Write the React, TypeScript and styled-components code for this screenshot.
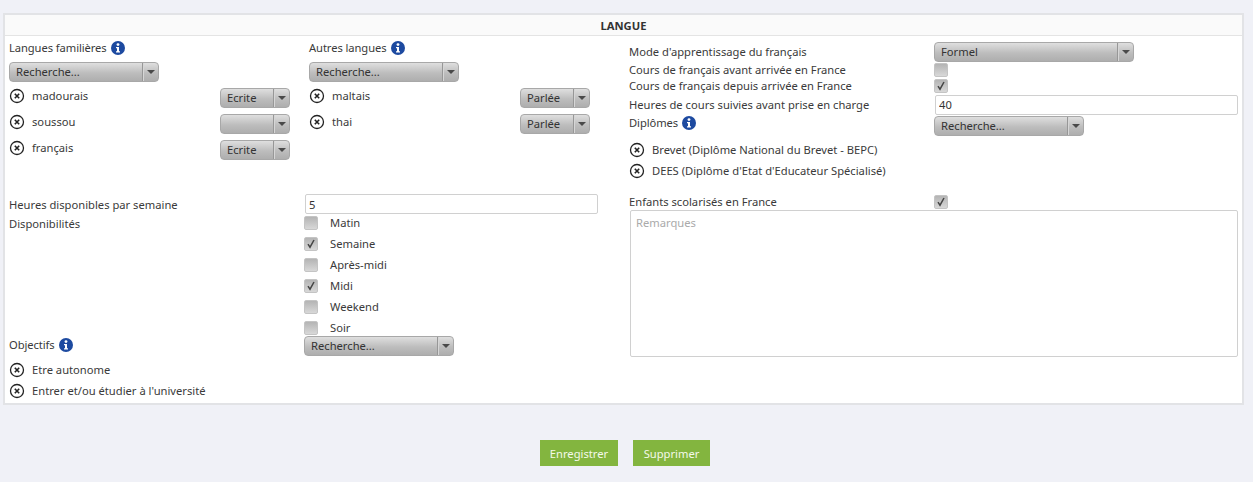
import React from 'react';
import styled, { createGlobalStyle } from 'styled-components';

const GlobalStyle = createGlobalStyle`
	html, body {
		margin: 0;
		padding: 0;
		background: #f0f1f7;
	}
	body {
		font-family: "Noto Sans", "Open Sans", sans-serif;
		font-size: 11.2px;
		color: #3a3a3a;
	}
	* {
		box-sizing: border-box;
	}
`;

const Page = styled.div`
	padding: 13px 9px 0 3px;
`;

const Panel = styled.section`
	border: 2px solid #e2e3e6;
	background: #fff;
	height: 392px;
`;

const PanelTitle = styled.h2`
	margin: 0;
	height: 21px;
	line-height: 21px;
	background: #fafafa;
	border-bottom: 1px solid #e4e4e4;
	font-size: 11.2px;
	font-weight: 700;
	text-align: center;
	color: #333;
`;

const PanelBody = styled.div`
	padding: 0 4px;
`;

const TopRow = styled.div`
	display: flex;
	height: 158px;
`;

const BottomRow = styled.div`
	display: flex;
`;

const LanguageColumn = styled.div`
	width: 300px;
	padding-top: 4px;
`;

const SideColumn = styled.div`
	flex: 1;
	padding-top: 5px;
	margin-left: 20px;
`;

const Heading = styled.div`
	display: flex;
	align-items: center;
	gap: 4px;
	height: 16px;
	line-height: 16px;
	margin-bottom: 6px;
	letter-spacing: -0.08px;
`;

const LanguageList = styled.div`
	display: flex;
	flex-direction: column;
	gap: 6px;
	width: 281px;
	margin-top: 6px;
`;

const LanguageRow = styled.div`
	display: flex;
	justify-content: space-between;
	height: 20px;
`;

const TagRow = styled.div<{ $top?: boolean }>`
	display: flex;
	align-items: ${(props) => (props.$top ? 'flex-start' : 'center')};
	gap: 7px;
	height: ${(props) => (props.$top ? '14px' : '21px')};
	line-height: 15px;
`;

const TagIcon = styled.svg`
	width: 16px;
	height: 16px;
	flex: none;
`;

const SelectBox = styled.div<{ $width: number }>`
	display: flex;
	width: ${(props) => props.$width}px;
	height: 20px;
	flex: none;
	border: 1px solid #a8a8a8;
	border-radius: 4px;
	background: linear-gradient(#dfdfdf, #bdbdbd 55%, #aeaeae);
	line-height: 18px;
	color: #333;
`;

const SelectValue = styled.span`
	flex: 1;
	padding-left: 6px;
`;

const SelectArrow = styled.span`
	position: relative;
	width: 16px;
	border-left: 1px solid #979797;
	box-shadow: inset 1px 0 0 #d6d6d6;

	&::after {
		content: "";
		position: absolute;
		top: 7px;
		left: 4px;
		border: 4px solid transparent;
		border-top: 4px solid #4a4a4a;
		border-bottom: 0;
	}
`;

const FormRow = styled.div<{ $height: number; $columns?: number }>`
	display: grid;
	grid-template-columns: ${(props) => props.$columns ?? 305}px 1fr;
	align-items: center;
	height: ${(props) => props.$height}px;
	line-height: 16px;
`;

const TagGroup = styled.div`
	margin: 3px 0 0 0;
`;

const TextField = styled.input`
	display: block;
	width: calc(100% - 1px);
	height: 20px;
	margin-left: 1px;
	padding: 0 3px;
	border: 1px solid #d0d0d0;
	border-radius: 2px;
	background: #fff;
	font: inherit;
	color: #333;
	outline: none;
`;

const CheckBox = styled.span`
	display: flex;
	align-items: center;
	justify-content: center;
	width: 14px;
	height: 14px;
	border: 1px solid #c4c4c4;
	border-radius: 2px;
	background: linear-gradient(#b4b4b4, #d8d8d8);
`;

const LeftBlock = styled.div`
	width: 600px;
`;

const HoursRow = styled.div`
	width: 589px;
`;

const HoursLabel = styled.span`
	padding-top: 1px;
`;

const RightBlock = styled.div`
	flex: 1;
	margin-left: 20px;
`;

const DispoGrid = styled.div`
	display: grid;
	grid-template-columns: 295px 1fr;
	height: 123px;
`;

const DispoLabel = styled.div`
	line-height: 21px;
`;

const CheckList = styled.div`
	display: flex;
	flex-direction: column;
	margin-top: -1px;
`;

const CheckRow = styled.div`
	display: flex;
	flex: none;
	align-items: center;
	gap: 12px;
	height: 21px;
	line-height: 16px;
`;

const ObjectifsGrid = styled.div`
	display: grid;
	grid-template-columns: 295px 1fr;
	height: 20px;
`;

const ObjectifsHeading = styled(Heading)`
	margin-top: 1px;
`;

const ObjectifsTags = styled.div`
	margin-top: 3px;
`;

const Remarks = styled.textarea`
	display: block;
	width: 608px;
	height: 147px;
	margin-left: 1px;
	padding: 4px 5px;
	border: 1px solid #d0d0d0;
	border-radius: 2px;
	font: inherit;
	resize: none;
	outline: none;

	&::placeholder {
		color: #aaa;
		opacity: 1;
	}
`;

const Footer = styled.div`
	display: flex;
	justify-content: center;
	gap: 15px;
	margin: 35px 0 0 3px;
`;

const ActionButton = styled.button<{ $width: number }>`
	width: ${(props) => props.$width}px;
	height: 26px;
	padding: 0;
	border: 0;
	background: #83b53f;
	color: #f4f9ea;
	font: inherit;
`;

const InfoIcon = () => (
	<svg width="14" height="14" viewBox="0 0 14 14">
		<circle cx="7" cy="7" r="7" fill="#1d4aa0" />
		<circle cx="7" cy="3.6" r="1.4" fill="#fff" />
		<path d="M5 6h3v4.2h1v1.3H5v-1.3h1V7.3H5z" fill="#fff" />
	</svg>
);

const RemoveIcon = () => (
	<TagIcon viewBox="0 0 16 16">
		<circle cx="8" cy="8" r="6.5" fill="none" stroke="#222" strokeWidth="1.3" />
		<path d="M5.8 5.8l4.4 4.4M10.2 5.8l-4.4 4.4" stroke="#222" strokeWidth="1.6" />
	</TagIcon>
);

const CheckMark = () => (
	<svg width="10" height="10" viewBox="0 0 10 10">
		<path d="M2 5.2l2 3L8 1" fill="none" stroke="#444" strokeWidth="1.5" />
	</svg>
);

const Select = ({ value, width }: { value?: string; width: number }) => (
	<SelectBox $width={width}>
		<SelectValue>{value}</SelectValue>
		<SelectArrow />
	</SelectBox>
);

const Tag = ({ label, top }: { label: string; top?: boolean }) => (
	<TagRow $top={top}>
		<RemoveIcon />
		<span>{label}</span>
	</TagRow>
);

const LanguageColumnBlock = ({ title, items }: { title: string; items: [string, string][] }) => (
	<LanguageColumn>
		<Heading>
			{title} <InfoIcon />
		</Heading>
		<Select value="Recherche..." width={150} />
		<LanguageList>
			{items.map(([name, level]) => (
				<LanguageRow key={name}>
					<Tag label={name} top />
					<Select value={level} width={70} />
				</LanguageRow>
			))}
		</LanguageList>
	</LanguageColumn>
);

const slots: [string, boolean][] = [
	['Matin', false],
	['Semaine', true],
	['Après-midi', false],
	['Midi', true],
	['Weekend', false],
	['Soir', false],
];

export default function App() {
	return (
		<Page>
			<GlobalStyle />
			<Panel>
				<PanelTitle>LANGUE</PanelTitle>
				<PanelBody>
					<TopRow>
						<LanguageColumnBlock
							title="Langues familières"
							items={[
								['madourais', 'Ecrite'],
								['soussou', ''],
								['français', 'Ecrite'],
							]}
						/>
						<LanguageColumnBlock
							title="Autres langues"
							items={[
								['maltais', 'Parlée'],
								['thai', 'Parlée'],
							]}
						/>
						<SideColumn>
							<FormRow $height={21}>
								<span>Mode d'apprentissage du français</span>
								<Select value="Formel" width={200} />
							</FormRow>
							<FormRow $height={16}>
								<span>Cours de français avant arrivée en France</span>
								<CheckBox />
							</FormRow>
							<FormRow $height={16}>
								<span>Cours de français depuis arrivée en France</span>
								<CheckBox>
									<CheckMark />
								</CheckBox>
							</FormRow>
							<FormRow $height={21}>
								<span>Heures de cours suivies avant prise en charge</span>
								<TextField readOnly value="40" />
							</FormRow>
							<FormRow $height={21}>
								<Heading as="span">
									Diplômes <InfoIcon />
								</Heading>
								<Select value="Recherche..." width={150} />
							</FormRow>
							<TagGroup>
								<Tag label="Brevet (Diplôme National du Brevet - BEPC)" />
								<Tag label="DEES (Diplôme d'Etat d'Educateur Spécialisé)" />
							</TagGroup>
						</SideColumn>
					</TopRow>
					<BottomRow>
						<LeftBlock>
							<HoursRow>
								<FormRow $height={19} $columns={295}>
									<HoursLabel>Heures disponibles par semaine</HoursLabel>
									<TextField readOnly value="5" />
								</FormRow>
							</HoursRow>
							<DispoGrid>
								<DispoLabel>Disponibilités</DispoLabel>
								<CheckList>
									{slots.map(([label, checked]) => (
										<CheckRow key={label}>
											<CheckBox>{checked && <CheckMark />}</CheckBox>
											<span>{label}</span>
										</CheckRow>
									))}
								</CheckList>
							</DispoGrid>
							<ObjectifsGrid>
								<ObjectifsHeading>
									Objectifs <InfoIcon />
								</ObjectifsHeading>
								<Select value="Recherche..." width={150} />
							</ObjectifsGrid>
							<ObjectifsTags>
								<Tag label="Etre autonome" />
								<Tag label="Entrer et/ou étudier à l'université" />
							</ObjectifsTags>
						</LeftBlock>
						<RightBlock>
							<FormRow $height={16}>
								<span>Enfants scolarisés en France</span>
								<CheckBox>
									<CheckMark />
								</CheckBox>
							</FormRow>
							<Remarks placeholder="Remarques" />
						</RightBlock>
					</BottomRow>
				</PanelBody>
			</Panel>
			<Footer>
				<ActionButton $width={78}>Enregistrer</ActionButton>
				<ActionButton $width={77}>Supprimer</ActionButton>
			</Footer>
		</Page>
	);
}
